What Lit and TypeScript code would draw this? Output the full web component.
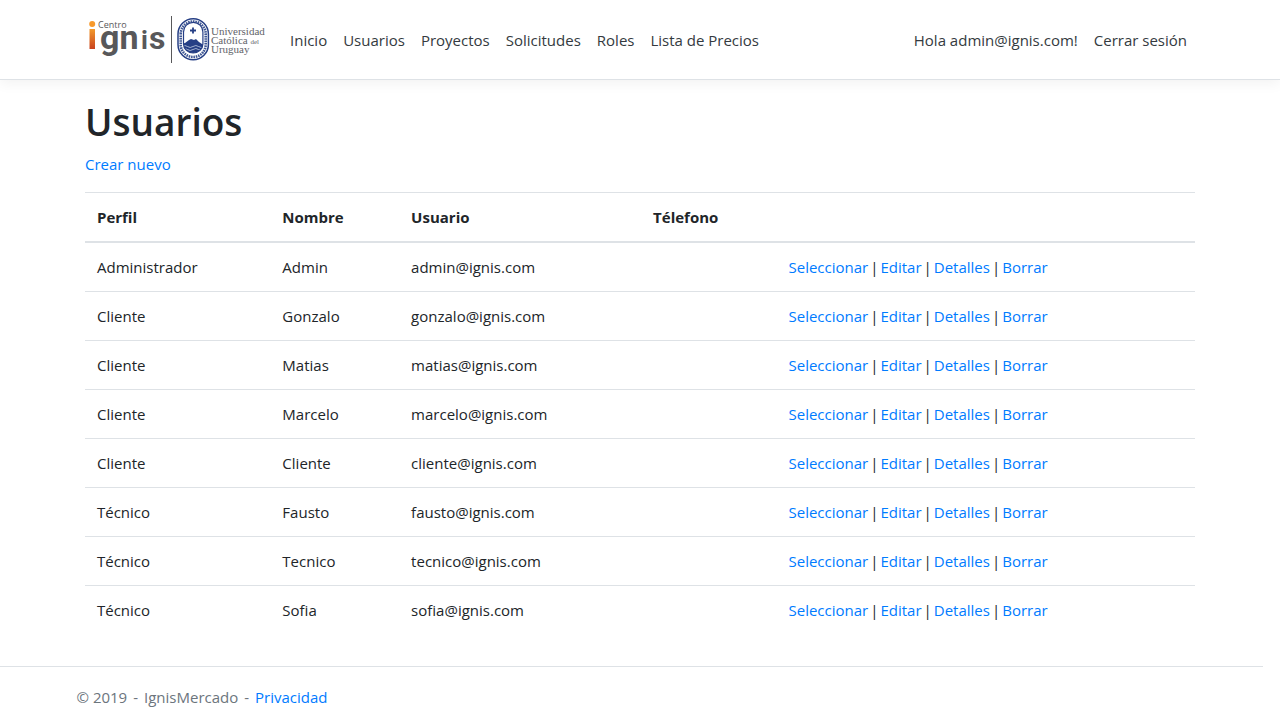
import { LitElement, html, css } from "lit";
import { customElement } from "lit/decorators.js";

interface User {
  role: string;
  name: string;
  email: string;
}

const NAV = ["Inicio", "Usuarios", "Proyectos", "Solicitudes", "Roles", "Lista de Precios"];
const USERS: User[] = [
  { role: "Administrador", name: "Admin", email: "admin@ignis.com" },
  { role: "Cliente", name: "Gonzalo", email: "gonzalo@ignis.com" },
  { role: "Cliente", name: "Matias", email: "matias@ignis.com" },
  { role: "Cliente", name: "Marcelo", email: "marcelo@ignis.com" },
  { role: "Cliente", name: "Cliente", email: "cliente@ignis.com" },
  { role: "Técnico", name: "Fausto", email: "fausto@ignis.com" },
  { role: "Técnico", name: "Tecnico", email: "tecnico@ignis.com" },
  { role: "Técnico", name: "Sofia", email: "sofia@ignis.com" },
];

@customElement("ignis-logo")
export class IgnisLogo extends LitElement {
  static styles = css`
    :host { display: block; }
    svg { display: block; }
    .small { font-family: "Open Sans", sans-serif; font-size: 9px; fill: #58585a; }
    .word { font-family: Roboto, sans-serif; font-size: 34px; font-weight: 700; fill: #58585a; }
    .short { font-size: 26px; }
    .last { font-size: 32px; }
    .serif { font-family: "Liberation Serif", serif; font-size: 11px; fill: #626469; }
    .tiny { font-size: 7px; }
  `;

  render() {
    return html`
      <svg width="181" height="50" viewBox="0 0 181 50" role="img" aria-label="Centro Ignis, Universidad Católica del Uruguay">
        <defs>
          <linearGradient id="flame" x1="0" y1="0" x2="0" y2="1">
            <stop offset="0" stop-color="#f39a2b" />
            <stop offset="1" stop-color="#c8421f" />
          </linearGradient>
          <clipPath id="shield"><path d="M98.500 29V17a9.700 9.700 0 0 1 19.400 0v12a9.700 9 0 0 1 -19.400 0z" /></clipPath>
        </defs>
        <circle cx="7.200" cy="9" r="3" fill="#f7992b" />
        <rect x="4.500" y="14" width="5.500" height="20" fill="url(#flame)" />
        <text class="small" x="13" y="13">Centro</text>
        <text class="word" y="34"><tspan x="15">gn</tspan><tspan class="short" x="56">i</tspan><tspan class="last" x="64">s</tspan></text>
        <path d="M86.500 1v47" stroke="#58585a" />
        <path d="M93 19a15.200 15.200 0 0 1 30.400 0v10.500a15.200 15.200 0 0 1 -30.400 0z" fill="#fff" stroke="#263f85" stroke-width="1.500" />
        <path d="M95.700 19a12.500 12.500 0 0 1 25 0v10.500a12.500 12.500 0 0 1 -25 0z" fill="none" stroke="#405894" stroke-width="2.600" stroke-dasharray="1.600 .8" />
        <g clip-path="url(#shield)">
          <path d="M96 3h26v40H96z" fill="#fff" />
          <path d="M96 29l4-1 4-3 2-1 3 1 2-1 3 3 3 2 5 1v12H96z" fill="#263f85" />
          <path d="M97 31.500q3-2 5.500 0t5.500 0 5.500 0 6 0M97 34.500q3-2 5.500 0t5.500 0 5.500 0 6 0" fill="none" stroke="#c7d0e6" stroke-width=".8" />
        </g>
        <path d="M98.500 29V17a9.700 9.700 0 0 1 19.400 0v12a9.700 9 0 0 1 -19.400 0z" fill="none" stroke="#263f85" stroke-width="1.200" />
        <path d="M108 12.500v6M105 15.500h6" stroke="#263f85" stroke-width="1.800" />
        <text class="serif" x="126" y="20">Universidad</text>
        <text class="serif" x="126" y="29">Católica <tspan class="tiny">del</tspan></text>
        <text class="serif" x="126" y="38">Uruguay</text>
      </svg>
    `;
  }
}

@customElement("app-root")
export class AppRoot extends LitElement {
  static styles = css`
    :host {
      display: flex;
      flex-direction: column;
      min-height: 100vh;
      background: #fff;
      color: #212529;
      font-family: "Segoe UI", "Open Sans", sans-serif;
      font-size: 15px;
      line-height: 24px;
    }
    * { box-sizing: border-box; }
    a { color: #007bff; text-decoration: none; }
    a:hover { text-decoration: underline; }
    .container { width: 100%; max-width: 1140px; margin: 0 auto; padding: 0 15px; }
    header {
      border-bottom: 1px solid #dee2e6;
      box-shadow: 0 4px 12px rgba(0, 0, 0, 0.05);
      margin-bottom: 16px;
    }
    .bar { display: flex; align-items: center; min-height: 79px; }
    .brand { margin-right: 16px; }
    nav { display: flex; flex: 1; }
    .bar .item { padding: 8px; color: #343a40; white-space: nowrap; }
    main { flex: 1; padding-bottom: 16px; }
    h1 { margin: 0 0 4px; font-size: 37px; font-weight: 600; line-height: 52px; }
    .create { margin: 0 0 16px; }
    table { width: 100%; table-layout: fixed; border-collapse: collapse; }
    th, td { padding: 12px; text-align: left; border-top: 1px solid #dee2e6; }
    th { font-weight: 700; border-bottom: 2px solid #dee2e6; }
    .role { width: 16.7%; }
    .name { width: 11.6%; }
    .email { width: 21.8%; }
    .phone { width: 12.2%; }
    .actions { display: flex; gap: 2px; }
    footer { margin-right: 17px; border-top: 1px solid #dee2e6; color: #6c757d; line-height: 60px; }
    .legal { display: flex; gap: 6px; }
  `;

  render() {
    return html`
      <header>
        <div class="container bar">
          <a class="brand" href="#"><ignis-logo></ignis-logo></a>
          <nav>${NAV.map((n) => html`<a class="item" href="#">${n}</a>`)}</nav>
          <a class="item" href="#">Hola admin@ignis.com!</a>
          <a class="item" href="#">Cerrar sesión</a>
        </div>
      </header>
      <main class="container">
        <h1>Usuarios</h1>
        <p class="create"><a href="#">Crear nuevo</a></p>
        <table>
          <thead>
            <tr>
              <th class="role">Perfil</th>
              <th class="name">Nombre</th>
              <th class="email">Usuario</th>
              <th class="phone">Télefono</th>
              <th></th>
            </tr>
          </thead>
          <tbody>
            ${USERS.map(
              (u) => html`<tr>
                <td>${u.role}</td>
                <td>${u.name}</td>
                <td>${u.email}</td>
                <td></td>
                <td>
                  <div class="actions">
                    <a href="#">Seleccionar</a><span>|</span><a href="#">Editar</a><span>|</span><a href="#">Detalles</a><span>|</span><a href="#">Borrar</a>
                  </div>
                </td>
              </tr>`
            )}
          </tbody>
        </table>
      </main>
      <footer>
        <div class="container legal">
          <span>© 2019</span><span>-</span><span>IgnisMercado</span><span>-</span><a href="#">Privacidad</a>
        </div>
      </footer>
    `;
  }
}
